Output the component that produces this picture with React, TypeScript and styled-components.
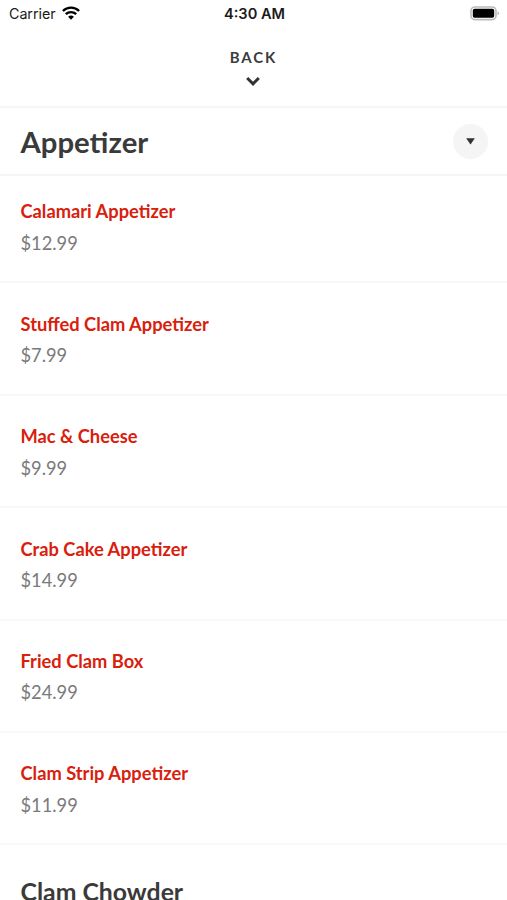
import React from 'react';
import styled, { createGlobalStyle } from 'styled-components';

const GlobalStyle = createGlobalStyle`
  * { box-sizing: border-box; }
  html, body { margin: 0; background: #fff; overflow: hidden; }
  body { font-family: Lato, sans-serif; }
`;

const Screen = styled.main`
  width: 507px;
  height: 900px;
  overflow: hidden;
  background: #fff;
  display: flex;
  flex-direction: column;
`;

const StatusBar = styled.header`
  flex: none;
  height: 28px;
  padding: 0 7px 2px 9px;
  display: grid;
  grid-template-columns: 1fr auto 1fr;
  align-items: center;
  font-family: Inter, sans-serif;
  font-size: 14.3px;
  color: #1a1a1a;
`;

const Carrier = styled.div`
  display: flex;
  align-items: center;
  gap: 6px;
  letter-spacing: -0.05px;
`;

const Time = styled.div`
  padding-top: 2px;
  font-size: 14.6px;
  font-weight: 600;
`;

const BatteryIcon = styled.svg`
  justify-self: end;
`;

const BackButton = styled.button`
  flex: none;
  height: 80px;
  padding: 20px 1px 0 0;
  border: 0;
  border-bottom: 2px solid #f6f6f6;
  background: #fff;
  display: flex;
  flex-direction: column;
  align-items: center;
  gap: 10px;
  font: 700 15px/18px Lato, sans-serif;
  letter-spacing: 1.8px;
  color: #3c3c3c;
`;

const BackLabel = styled.span`
  margin-right: -0.8px;
`;

const SectionHeader = styled.div`
  flex: none;
  height: 68px;
  padding: 1px 19px 0 20.5px;
  border-bottom: 2px solid #f6f6f6;
  display: flex;
  align-items: center;
  justify-content: space-between;
`;

const Title = styled.h1`
  margin: 1px 0 0;
  font-size: 29.3px;
  line-height: 36px;
  font-weight: 700;
  color: #3a3a3a;
`;

const Toggle = styled.button`
  width: 35px;
  height: 35px;
  padding: 0;
  border: 0;
  border-radius: 50%;
  background: #f5f5f5;
  display: grid;
  place-items: center;
`;

const Item = styled.article<{ $first: boolean }>`
  flex: none;
  height: ${({ $first }) => ($first ? 107.4 : 112.4)}px;
  padding: 0 20.5px 27.5px;
  border-bottom: 2px solid #f7f7f7;
  display: flex;
  flex-direction: column;
  justify-content: flex-end;
`;

const Name = styled.h2`
  margin: 0;
  font-size: 18.3px;
  line-height: 22px;
  font-weight: 700;
  color: #d8200d;
`;

const Price = styled.p`
  margin: 9.5px 0 0;
  font-size: 18.3px;
  line-height: 22px;
  color: #7b7b7b;
`;

const NextTitle = styled.h1`
  margin: 0;
  padding: 30px 20.5px 0;
  font-size: 24.8px;
  line-height: 34px;
  font-weight: 700;
  color: #3a3a3a;
`;

const items = [
  ['Calamari Appetizer', '$12.99'],
  ['Stuffed Clam Appetizer', '$7.99'],
  ['Mac & Cheese', '$9.99'],
  ['Crab Cake Appetizer', '$14.99'],
  ['Fried Clam Box', '$24.99'],
  ['Clam Strip Appetizer', '$11.99'],
];

export default function App() {
  return (
    <Screen>
      <GlobalStyle />
      <StatusBar>
        <Carrier>
          Carrier
          <svg width="18" height="14" viewBox="0 0 18 14" fill="none" stroke="#000" strokeWidth="2.4">
            <path d="M.9 5C5.5.5 12.5.5 17.1 5M3.8 8.2C6.7 5.4 11.3 5.4 14.2 8.2" />
            <path d="M6.1 10.7Q9 8.4 11.9 10.7L9 13.7Z" fill="#000" stroke="none" />
          </svg>
        </Carrier>
        <Time>4:30 AM</Time>
        <BatteryIcon width="30" height="15" viewBox="0 0 30 15">
          <rect x="1" y="1" width="25" height="12.6" rx="3.8" fill="none" stroke="#bbb" strokeWidth="1.6" />
          <rect x="2.8" y="2.8" width="21.4" height="9" rx="1.8" />
          <path d="M27.6 5.2Q30.2 7.3 27.6 9.4Z" fill="#aaa" />
        </BatteryIcon>
      </StatusBar>
      <BackButton>
        <BackLabel>BACK</BackLabel>
        <svg width="14" height="11" viewBox="0 0 14 11" fill="none" stroke="#333" strokeWidth="3">
          <path d="M1.2 2l5.8 5.8L12.8 2" />
        </svg>
      </BackButton>
      <SectionHeader>
        <Title>Appetizer</Title>
        <Toggle aria-label="Collapse">
          <svg width="9" height="7" viewBox="0 0 9 7"><path d="M.2.2h8.6L4.5 6.5Z" fill="#333" /></svg>
        </Toggle>
      </SectionHeader>
      {items.map(([name, price], index) => (
        <Item key={name} $first={index === 0}>
          <Name>{name}</Name>
          <Price>{price}</Price>
        </Item>
      ))}
      <NextTitle>Clam Chowder</NextTitle>
    </Screen>
  );
}
